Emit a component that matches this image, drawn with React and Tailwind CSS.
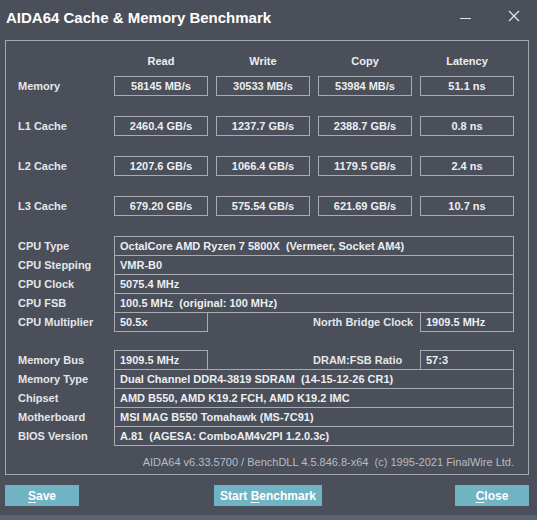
import React from 'react';

const font = { fontFamily: '"Liberation Sans", Arial, sans-serif' };

const bench = [
  { label: 'Memory', vals: ['58145 MB/s', '30533 MB/s', '53984 MB/s', '51.1 ns'] },
  { label: 'L1 Cache', vals: ['2460.4 GB/s', '1237.7 GB/s', '2388.7 GB/s', '0.8 ns'] },
  { label: 'L2 Cache', vals: ['1207.6 GB/s', '1066.4 GB/s', '1179.5 GB/s', '2.4 ns'] },
  { label: 'L3 Cache', vals: ['679.20 GB/s', '575.54 GB/s', '621.69 GB/s', '10.7 ns'] },
];

function Label({ children }) {
  return <div className="w-[96px] shrink-0 text-[11px] font-bold text-[#e4e6ea] leading-[20px]">{children}</div>;
}

function FullRow({ label, value }) {
  return (
    <div className="flex -mt-px first:mt-0">
      <Label>{label}</Label>
      <div className="w-[400px] h-[20px] border border-[#a7abb2] pl-[5px] text-[11px] font-bold text-[#eceef1] leading-[18px] whitespace-pre">
        {value}
      </div>
    </div>
  );
}

function SplitRow({ label, value, label2, value2 }) {
  return (
    <div className="flex -mt-px first:mt-0">
      <Label>{label}</Label>
      <div className="w-[94px] h-[20px] border border-[#a7abb2] pl-[5px] text-[11px] font-bold text-[#eceef1] leading-[18px]">
        {value}
      </div>
      <div className="w-[212px] pl-[105px] text-[11px] font-bold text-[#e4e6ea] leading-[20px] whitespace-nowrap">{label2}</div>
      <div className="w-[94px] h-[20px] border border-[#a7abb2] pl-[5px] text-[11px] font-bold text-[#eceef1] leading-[18px]">
        {value2}
      </div>
    </div>
  );
}

function Btn({ pre, u, post, className }) {
  return (
    <button className={`h-[21px] bg-[#70b4c3] text-white text-[12px] font-bold ${className}`}>
      {pre}
      <span className="underline underline-offset-2">{u}</span>
      {post}
    </button>
  );
}

export default function App() {
  return (
    <div className="w-[537px] h-[520px] bg-[#4a4f59] flex flex-col overflow-hidden" style={font}>
      {/* title bar */}
      <div className="h-[40px] flex items-start pt-[9px] pl-[6px] pr-[17px]">
        <div className="text-[15px] font-bold text-white leading-[18px]">AIDA64 Cache &amp; Memory Benchmark</div>
        <div className="ml-auto flex items-center gap-[36px] pt-[1px]">
          <svg width="12" height="12" viewBox="0 0 12 12">
            <path d="M0 8.5h11" stroke="#e2e4e8" strokeWidth="1" />
          </svg>
          <svg width="12" height="12" viewBox="0 0 12 12">
            <path d="M1 1l10 10M11 1L1 11" stroke="#e2e4e8" strokeWidth="1.3" />
          </svg>
        </div>
      </div>

      {/* group box */}
      <div className="ml-[5px] w-[524px] h-[435px] border border-[#a3a7ae] pl-[12px] pt-[13px] flex flex-col">
        <div className="flex h-[14px] text-[11px] font-bold text-[#eceef1] leading-[14px]">
          <div className="w-[96px]" />
          <div className="flex gap-[8px]">
            {['Read', 'Write', 'Copy', 'Latency'].map((h) => (
              <div key={h} className="w-[94px] text-center">{h}</div>
            ))}
          </div>
        </div>

        <div className="mt-[8px] flex flex-col gap-[20px]">
          {bench.map((r) => (
            <div key={r.label} className="flex">
              <Label>{r.label}</Label>
              <div className="flex gap-[8px]">
                {r.vals.map((v, i) => (
                  <div
                    key={i}
                    className="w-[94px] h-[20px] border border-[#a7abb2] text-center text-[11px] font-bold text-[#eceef1] leading-[18px]"
                  >
                    {v}
                  </div>
                ))}
              </div>
            </div>
          ))}
        </div>

        <div className="mt-[20px] flex flex-col">
          <FullRow label="CPU Type" value="OctalCore AMD Ryzen 7 5800X  (Vermeer, Socket AM4)" />
          <FullRow label="CPU Stepping" value="VMR-B0" />
          <FullRow label="CPU Clock" value="5075.4 MHz" />
          <FullRow label="CPU FSB" value="100.5 MHz  (original: 100 MHz)" />
          <SplitRow label="CPU Multiplier" value="50.5x" label2="North Bridge Clock" value2="1909.5 MHz" />
        </div>

        <div className="mt-[18px] flex flex-col">
          <SplitRow label="Memory Bus" value="1909.5 MHz" label2="DRAM:FSB Ratio" value2="57:3" />
          <FullRow label="Memory Type" value="Dual Channel DDR4-3819 SDRAM  (14-15-12-26 CR1)" />
          <FullRow label="Chipset" value="AMD B550, AMD K19.2 FCH, AMD K19.2 IMC" />
          <FullRow label="Motherboard" value="MSI MAG B550 Tomahawk (MS-7C91)" />
          <FullRow label="BIOS Version" value="A.81  (AGESA: ComboAM4v2PI 1.2.0.3c)" />
        </div>

        <div className="mt-[9px] w-[496px] text-right text-[11px] text-[#b8bcc3] leading-[14px] whitespace-pre">
          AIDA64 v6.33.5700 / BenchDLL 4.5.846.8-x64  (c) 1995-2021 FinalWire Ltd.
        </div>
      </div>

      {/* buttons */}
      <div className="mt-[10px] flex items-start pl-[5px] pr-[8px]">
        <Btn pre="" u="S" post="ave" className="w-[74px]" />
        <Btn pre="Start " u="B" post="enchmark" className="w-[108px] ml-[135px]" />
        <Btn pre="" u="C" post="lose" className="w-[74px] ml-auto" />
      </div>

      <div className="mt-auto h-[5px] bg-[#5a6477]" />
    </div>
  );
}
